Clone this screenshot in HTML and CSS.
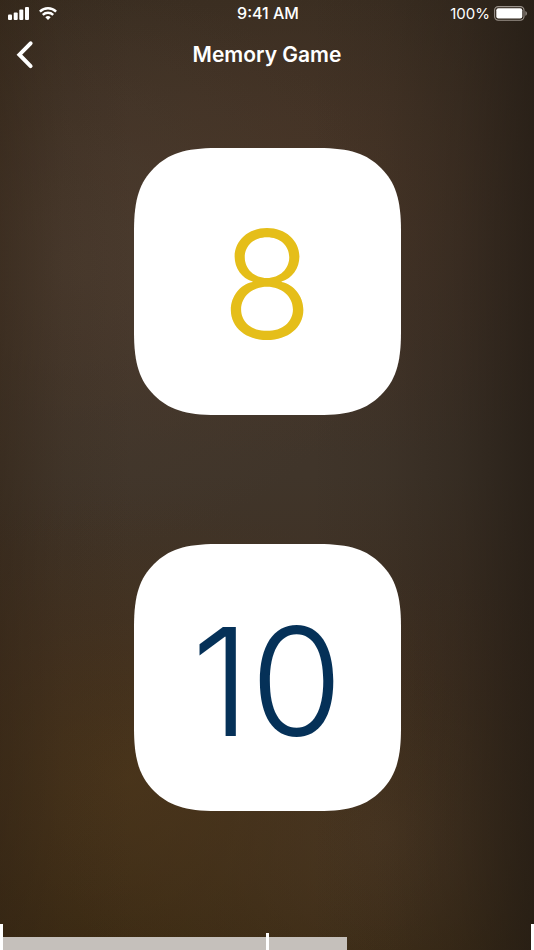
FILE: index.html
```
<!DOCTYPE html>
<html lang="en">
<head>
    <meta charset="UTF-8">
    <meta name="viewport" content="width=device-width, initial-scale=1">
    <title>Memory Game</title>
    <link rel="stylesheet" href="styles.css">
</head>
<body>
    <div class="status-bar">
        <div class="status-left">
            <svg width="22" height="14" viewBox="0 0 22 14" fill="#fff" aria-hidden="true">
                <rect x="0" y="7.5" width="4" height="5.5" rx="1"/>
                <rect x="5.7" y="5.5" width="4" height="7.5" rx="1"/>
                <rect x="11.3" y="2.5" width="4" height="10.5" rx="1"/>
                <rect x="17" y="0" width="4" height="13" rx="1"/>
            </svg>
            <svg width="18" height="14" viewBox="0 0 18 14" fill="none" stroke="#fff" stroke-width="2.4" aria-hidden="true">
                <path d="M0.9 4.6a11.6 11.6 0 0 1 16.2 0"/>
                <path d="M3.8 7.9a7.4 7.4 0 0 1 10.4 0"/>
                <path d="M9 13.1L6.3 10.3a3.9 3.9 0 0 1 5.4 0z" fill="#fff" stroke="none"/>
            </svg>
        </div>
        <div class="status-time">9:41 AM</div>
        <div class="status-right">
            <span class="battery-text">100%</span>
            <svg width="34" height="16" viewBox="0 0 34 16" aria-hidden="true">
                <rect x="0.6" y="0.6" width="29.4" height="13.6" rx="3.6" fill="none" stroke="#9a928b" stroke-width="1.1"/>
                <rect x="2.3" y="2.3" width="26" height="10.2" rx="2" fill="#fff"/>
                <path d="M31.4 5c2 .8 2 4 0 4.8z" fill="#9a928b"/>
            </svg>
        </div>
    </div>

    <header class="nav">
        <button class="back-btn" type="button" aria-label="Back">
            <svg width="18" height="30" viewBox="0 0 18 30" fill="none" stroke="#fff" stroke-width="4" stroke-linecap="round" stroke-linejoin="miter" aria-hidden="true">
                <path d="M14.6 3.3L3.4 14.7l11.2 11.4"/>
            </svg>
        </button>
        <h1>Memory Game</h1>
    </header>

    <main class="cards">
        <button class="card" type="button">
            <svg class="card-shape" viewBox="0 0 100 100" aria-hidden="true">
                <path d="M0 31C0 19 2.2 12.8 7.5 7.5S19 0 31 0H69C81 0 87.2 2.2 92.5 7.5S100 19 100 31V69C100 81 97.8 87.2 92.5 92.5S81 100 69 100H31C19 100 12.8 97.8 7.5 92.5S0 81 0 69Z"/>
            </svg>
            <span class="number yellow">8</span>
        </button>
        <button class="card" type="button">
            <svg class="card-shape" viewBox="0 0 100 100" aria-hidden="true">
                <path d="M0 31C0 19 2.2 12.8 7.5 7.5S19 0 31 0H69C81 0 87.2 2.2 92.5 7.5S100 19 100 31V69C100 81 97.8 87.2 92.5 92.5S81 100 69 100H31C19 100 12.8 97.8 7.5 92.5S0 81 0 69Z"/>
            </svg>
            <span class="number navy">10</span>
        </button>
    </main>

    <footer class="timer">
        <progress class="timer-bar" value="65" max="100" aria-label="Time"></progress>
        <div class="ticks">
            <span class="tick"></span>
            <span class="tick short"></span>
            <span class="tick"></span>
        </div>
    </footer>
</body>
</html>
```
FILE: styles.css
```
* {
    box-sizing: border-box;
}

body {
    margin: 0;
    min-height: 100vh;
    display: flex;
    flex-direction: column;
    color: #fff;
    font-family: Inter, "Liberation Sans", sans-serif;
    background:
        linear-gradient(90deg, rgba(48, 34, 20, 0.45) 0%, rgba(48, 34, 20, 0.12) 12%, rgba(48, 34, 20, 0) 25%),
        linear-gradient(270deg, rgba(34, 27, 20, 0.75) 0%, rgba(34, 27, 20, 0.35) 14%, rgba(34, 27, 20, 0.1) 28%, rgba(34, 27, 20, 0) 42%),
        radial-gradient(ellipse 65% 30% at 24% 82%, rgba(76, 54, 26, 0.75), rgba(76, 54, 26, 0.25) 55%, rgba(76, 54, 26, 0)),
        radial-gradient(ellipse 60% 28% at 72% 88%, rgba(76, 57, 38, 0.75), rgba(76, 57, 38, 0.25) 55%, rgba(76, 57, 38, 0)),
        radial-gradient(ellipse 60% 30% at 14% 28%, rgba(75, 60, 47, 0.8), rgba(75, 60, 47, 0.3) 55%, rgba(75, 60, 47, 0)),
        radial-gradient(ellipse 90% 28% at 58% 20%, rgba(72, 53, 38, 0.9), rgba(72, 53, 38, 0.4) 55%, rgba(72, 53, 38, 0)),
        linear-gradient(180deg, #372c20 0%, #41342a 25%, #40352a 50%, #3f2f21 70%, #382811 100%);
}

button {
    padding: 0;
    border: none;
    background: none;
    color: inherit;
    font-family: inherit;
    cursor: pointer;
}

svg {
    display: block;
}

.status-bar {
    display: grid;
    grid-template-columns: 1fr auto 1fr;
    align-items: center;
    height: 27px;
    padding: 0 6px 0 8px;
    font-size: 16px;
    line-height: 27px;
}

.status-left {
    display: flex;
    gap: 9px;
}

.status-time {
    font-weight: 500;
}

.status-right {
    display: flex;
    justify-content: flex-end;
    align-items: center;
    gap: 4px;
}

.battery-text {
    font-size: 15px;
}

.nav {
    display: grid;
    grid-template-columns: 48px 1fr 48px;
    align-items: center;
    height: 56px;
}

.back-btn {
    padding: 8px 16px;
}

.nav h1 {
    margin: 0;
    text-align: center;
    font-size: 21px;
    font-weight: 600;
    line-height: 28px;
}

.cards {
    flex: 1;
    display: flex;
    flex-direction: column;
    align-items: center;
    justify-content: space-around;
    padding-bottom: 48px;
}

.card {
    position: relative;
    display: flex;
    align-items: center;
    justify-content: center;
    width: 50%;
    aspect-ratio: 1;
    padding-top: 8px;
}

.card-shape {
    position: absolute;
    inset: 0;
    width: 100%;
    height: 100%;
    fill: #fff;
}

.number {
    position: relative;
    font-size: 150px;
    font-weight: 300;
    line-height: 180px;
}

.yellow {
    color: #e5be19;
}

.navy {
    color: #053158;
}

/* time left, with marks at start, middle and end */
.timer {
    position: relative;
    display: flex;
    align-items: flex-end;
    height: 26px;
}

.timer-bar {
    appearance: none;
    -webkit-appearance: none;
    display: block;
    width: 100%;
    height: 13px;
    border: none;
    background: transparent;
}

.timer-bar::-webkit-progress-bar {
    background: transparent;
}

.timer-bar::-webkit-progress-value {
    background: #c5c0bb;
}

.ticks {
    position: absolute;
    inset: 0;
    display: flex;
    justify-content: space-between;
    align-items: flex-end;
}

.tick {
    width: 3px;
    height: 26px;
    background: #fff;
}

.tick.short {
    height: 17px;
}
```
